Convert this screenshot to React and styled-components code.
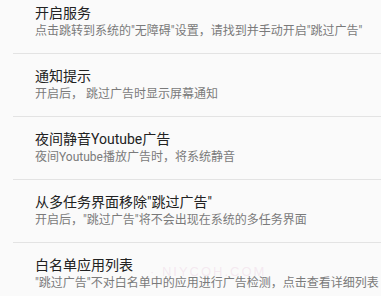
import React from "react";
import styled, { createGlobalStyle } from "styled-components";

const GlobalStyle = createGlobalStyle`
  html, body {
    margin: 0;
    padding: 0;
    background: #fafafa;
  }
  body {
    font-family: Roboto, "Noto Sans CJK SC", sans-serif;
  }
`;

const Page = styled.div`
  position: relative;
  width: 381px;
  height: 296px;
  overflow: hidden;
  background: #fafafa;
`;

// list is scrolled a little, so the first row is cut at the top
const List = styled.div`
  display: flex;
  flex-direction: column;
  margin-top: -9px;
`;

const Row = styled.div`
  display: flex;
  flex-direction: column;
  justify-content: center;
  height: 62px;
  padding-left: 22px;
  margin-left: 13px;
  border-bottom: 1px solid #e3e3e3;
  &:last-child {
    border-bottom: none;
  }
`;

const Title = styled.div`
  font-size: 14px;
  line-height: 18px;
  margin-bottom: 1px;
  color: #222222;
`;

const Summary = styled.div`
  font-size: 12px;
  line-height: 17px;
  color: #7a7a7a;
  white-space: nowrap;
`;

const Watermark = styled.div`
  position: absolute;
  left: 150px;
  top: 264px;
  font-family: "Liberation Sans", sans-serif;
  font-size: 13px;
  letter-spacing: 2px;
  color: rgba(230, 190, 215, 0.3);
  pointer-events: none;
`;

const settings = [
  {
    title: "开启服务",
    summary: "点击跳转到系统的\"无障碍\"设置，请找到并手动开启\"跳过广告\"",
  },
  { title: "通知提示", summary: "开启后， 跳过广告时显示屏幕通知" },
  { title: "夜间静音Youtube广告", summary: "夜间Youtube播放广告时，将系统静音" },
  {
    title: "从多任务界面移除\"跳过广告\"",
    summary: "开启后，\"跳过广告\"将不会出现在系统的多任务界面",
  },
  {
    title: "白名单应用列表",
    summary: "\"跳过广告\"不对白名单中的应用进行广告检测，点击查看详细列表",
  },
];

const App = () => {
  return (
    <Page>
      <GlobalStyle />
      <List>
        {settings.map((item, i) => (
          <Row key={i}>
            <Title>{item.title}</Title>
            <Summary>{item.summary}</Summary>
          </Row>
        ))}
      </List>
      <Watermark>· NIYCOH.COM</Watermark>
    </Page>
  );
};

export default App;
